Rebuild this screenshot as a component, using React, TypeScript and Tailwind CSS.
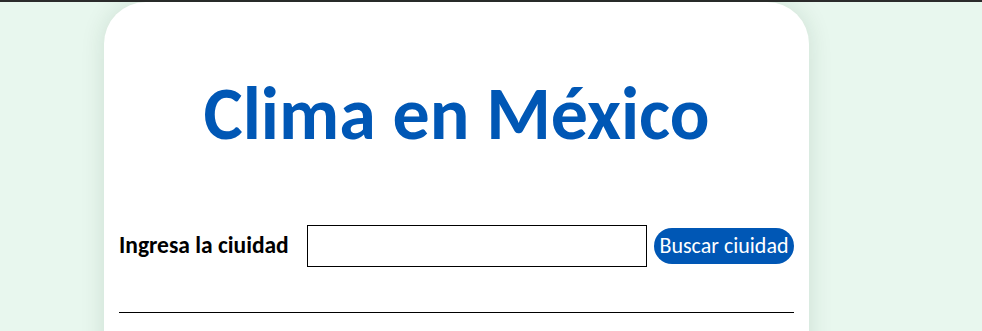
export default function App() {
  return (
    <div className="min-h-screen border-t-2 border-[#2b2b2b] bg-[#e8f7ee] font-['Calibri','Carlito','Lato',sans-serif]">
      <div className="ml-[104px] w-[705px] rounded-[42px] bg-white px-[15px] pb-24 shadow-[0_0_24px_rgba(0,60,30,0.12)]">
        <h1 className="pt-[68px] text-center text-[74px] font-bold leading-[88px] text-[#0057b5]">
          Clima en México
        </h1>
        <div className="mt-[67px] flex items-center">
          <label className="w-[172px] shrink-0 whitespace-nowrap text-[23.5px] font-bold leading-none text-black">Ingresa la ciuidad</label>
          <input type="text" className="ml-[16px] h-[42px] w-[340px] shrink-0 border border-black bg-white px-2 text-[18px] outline-none" />
          <button className="ml-[7px] h-[36px] w-[140px] shrink-0 whitespace-nowrap rounded-full bg-[#0057b5] text-[22px] leading-none text-white">
            Buscar ciuidad
          </button>
        </div>
        <hr className="mt-[45px] border-t border-black" />
      </div>
    </div>
  );
}
